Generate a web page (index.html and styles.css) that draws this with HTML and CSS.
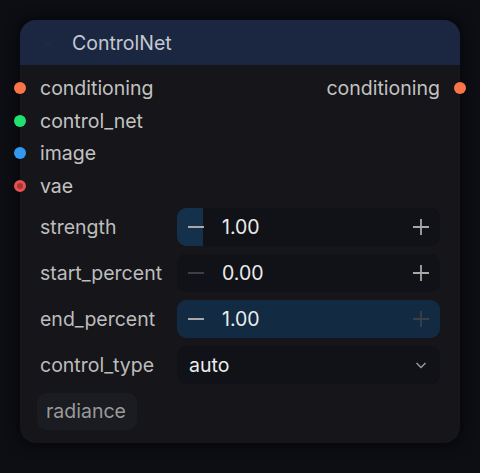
FILE: index.html
```html
<!DOCTYPE html>
<html lang="en">
  <head>
    <meta charset="utf-8" />
    <meta name="viewport" content="width=device-width, initial-scale=1" />
    <title>ControlNet</title>
    <link rel="stylesheet" href="styles.css">
  </head>
  <body>
    <div class="node">
      <div class="node-header">
        <svg class="collapse" width="12" height="12" viewBox="0 0 12 12">
          <path d="M2 4l4 4 4-4" fill="none" stroke="#212c44" stroke-width="1.6" />
        </svg>
        <span class="title">ControlNet</span>
      </div>

      <div class="slots">
        <div class="slot-row">
          <div class="slot in"><span class="dot orange"></span>conditioning</div>
          <div class="slot out">conditioning<span class="dot orange"></span></div>
        </div>
        <div class="slot-row">
          <div class="slot in"><span class="dot green"></span>control_net</div>
        </div>
        <div class="slot-row">
          <div class="slot in"><span class="dot blue"></span>image</div>
        </div>
        <div class="slot-row">
          <div class="slot in"><span class="dot red"></span>vae</div>
        </div>
      </div>

      <div class="widgets">
        <div class="widget-row">
          <label>strength</label>
          <div class="number">
            <div class="fill" style="width: 10%"></div>
            <span class="btn minus">
              <svg width="18" height="18" viewBox="0 0 18 18"><path d="M1 9h16" stroke="currentColor" stroke-width="1.8" /></svg>
            </span>
            <span class="value">1.00</span>
            <span class="btn plus">
              <svg width="18" height="18" viewBox="0 0 18 18"><path d="M1 9h16M9 1v16" stroke="currentColor" stroke-width="1.8" /></svg>
            </span>
          </div>
        </div>
        <div class="widget-row">
          <label>start_percent</label>
          <div class="number">
            <span class="btn minus dim">
              <svg width="18" height="18" viewBox="0 0 18 18"><path d="M1 9h16" stroke="currentColor" stroke-width="1.8" /></svg>
            </span>
            <span class="value">0.00</span>
            <span class="btn plus">
              <svg width="18" height="18" viewBox="0 0 18 18"><path d="M1 9h16M9 1v16" stroke="currentColor" stroke-width="1.8" /></svg>
            </span>
          </div>
        </div>
        <div class="widget-row">
          <label>end_percent</label>
          <div class="number">
            <div class="fill full" style="width: 100%"></div>
            <span class="btn minus">
              <svg width="18" height="18" viewBox="0 0 18 18"><path d="M1 9h16" stroke="currentColor" stroke-width="1.8" /></svg>
            </span>
            <span class="value">1.00</span>
            <span class="btn plus dim">
              <svg width="18" height="18" viewBox="0 0 18 18"><path d="M1 9h16M9 1v16" stroke="currentColor" stroke-width="1.8" /></svg>
            </span>
          </div>
        </div>
        <div class="widget-row">
          <label>control_type</label>
          <div class="select">
            <span class="value">auto</span>
            <svg width="14" height="14" viewBox="0 0 14 14">
              <path d="M2.5 5l4.5 4.5 4.5-4.5" fill="none" stroke="#9a9a9a" stroke-width="1.5" />
            </svg>
          </div>
        </div>
      </div>

      <div class="tags">
        <span class="chip">radiance</span>
      </div>
    </div>
  </body>
</html>
```

FILE: styles.css
```css
body {
  margin: 0;
  padding: 20px;
  background: #0c0e14;
  font-family: Inter, "Noto Sans", sans-serif;
  color: #bdbdbd;
}
.node {
  width: 440px;
  height: 423px;
  background: #161519;
  border-radius: 16px;
  box-shadow: 0 0 12px 4px rgba(0, 0, 0, 0.45);
  box-sizing: border-box;
}
.node-header {
  height: 45px;
  background: #1b2740;
  border-radius: 16px 16px 0 0;
  display: flex;
  align-items: center;
  padding-left: 22px;
}
.collapse {
  margin-right: 18px;
}
.title {
  font-size: 19.5px;
  color: #c3c8d2;
}
.slots {
  padding-top: 7px;
}
.slot-row {
  height: 32.5px;
  display: flex;
  justify-content: space-between;
  align-items: center;
}
.slot {
  display: flex;
  align-items: center;
  font-size: 19.5px;
  color: #c2c2c2;
}
.slot.in .dot {
  margin-left: -6px;
  margin-right: 14px;
}
.slot.out .dot {
  margin-left: 14px;
  margin-right: -6px;
}
.dot {
  width: 12px;
  height: 12px;
  border-radius: 50%;
  display: inline-block;
  box-sizing: border-box;
}
.orange {
  background: #f97448;
}
.green {
  background: #20e070;
}
.blue {
  background: #3399f0;
}
.red {
  background: #a83434;
  border: 3px solid #e35252;
}
.widgets {
  padding: 6px 20px 0 20px;
  display: flex;
  flex-direction: column;
  gap: 8px;
}
.widget-row {
  display: flex;
  align-items: center;
  height: 38px;
}
.widget-row label {
  width: 137px;
  font-size: 19.5px;
  color: #bdbdbd;
}
.number,
.select {
  position: relative;
  flex: 1;
  height: 38px;
  background: #101218;
  border-radius: 9px;
  display: flex;
  align-items: center;
  overflow: hidden;
}
.fill {
  position: absolute;
  left: 0;
  top: 0;
  bottom: 0;
  background: #15304a;
}
.fill.full {
  background: #122a42;
}
.btn {
  position: relative;
  width: 18px;
  height: 18px;
  color: #a8a8a8;
}
.btn svg {
  display: block;
}
.btn.minus {
  margin-left: 10px;
}
.btn.plus {
  margin-left: auto;
  margin-right: 10px;
}
.btn.dim {
  color: #3a4048;
}
.value {
  position: relative;
  margin-left: 17px;
  font-size: 19.5px;
  color: #ececec;
}
.select .value {
  margin-left: 12px;
}
.select svg {
  margin-left: auto;
  margin-right: 12px;
}
.tags {
  padding: 9px 0 0 17px;
}
.chip {
  display: inline-block;
  padding: 6px 11px 7px 9px;
  background: #1a1c21;
  border-radius: 9px;
  font-size: 19.5px;
  color: #9a9a9a;
}
```
